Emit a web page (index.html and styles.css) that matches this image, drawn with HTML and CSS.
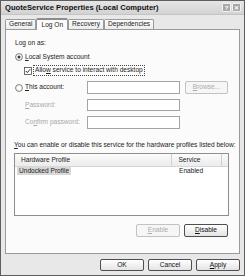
FILE: index.html
```html
<!DOCTYPE html>
<html>
<head>
<meta charset="utf-8">
<link rel="stylesheet" href="styles.css">
</head>
<body>
<div class="window">
  <div class="titlebar">
    <span class="title">QuoteService Properties (Local Computer)</span>
    <span class="tbtns"><span class="tbtn">?</span><span class="tbtn">✕</span></span>
  </div>
  <div class="content">
    <div class="tabs">
      <div class="tab">General</div>
      <div class="tab active">Log On</div>
      <div class="tab">Recovery</div>
      <div class="tab">Dependencies</div>
    </div>
    <div class="panel">
      <div class="loglabel">Log on as:</div>
      <div class="radiorow r1">
        <svg class="radio" width="8" height="8" viewBox="0 0 8 8"><circle cx="4" cy="4" r="3.4" fill="#fff" stroke="#5a5a5a" stroke-width="0.8"/><circle cx="4" cy="4" r="1.5" fill="#3a3a3a"/></svg>
        <span><u>L</u>ocal System account</span>
      </div>
      <div class="checkrow">
        <svg class="check" width="8" height="8" viewBox="0 0 8 8"><rect x="0.5" y="0.5" width="7" height="7" fill="#fff" stroke="#4a4a4a" stroke-width="0.8"/><path d="M1.8 4 L3.3 5.6 L6.2 2.2" fill="none" stroke="#2a2a2a" stroke-width="1"/></svg>
        <span class="focus">Allo<u>w</u> service to interact with desktop</span>
      </div>
      <div class="fieldrow r-this">
        <div class="flabel">
          <svg class="radio" width="8" height="8" viewBox="0 0 8 8"><circle cx="4" cy="4" r="3.4" fill="#fff" stroke="#5a5a5a" stroke-width="0.8"/></svg>
          <span><u>T</u>his account:</span>
        </div>
        <div class="field"></div>
        <div class="btn small disabled"><u>B</u>rowse...</div>
      </div>
      <div class="fieldrow r-pass">
        <div class="flabel indent disabled-text"><span><u>P</u>assword:</span></div>
        <div class="field"></div>
      </div>
      <div class="fieldrow r-conf">
        <div class="flabel indent disabled-text"><span>Co<u>n</u>firm password:</span></div>
        <div class="field"></div>
      </div>
      <div class="hint"><span><u>Y</u>ou can enable or disable this service for the hardware profiles listed below:</span></div>
      <div class="list">
        <div class="lhead">
          <div class="hcol c1">Hardware Profile</div>
          <div class="hcol c2">Service</div>
          <div class="hcol c3"></div>
        </div>
        <div class="lrow">
          <div class="lcell c1"><span class="sel">Undocked Profile</span></div>
          <div class="lcell c2">Enabled</div>
        </div>
      </div>
      <div class="listbtns">
        <div class="btn disabled"><u>E</u>nable</div>
        <div class="btn"><u>D</u>isable</div>
      </div>
    </div>
    <div class="footer">
      <div class="btn">OK</div>
      <div class="btn">Cancel</div>
      <div class="btn"><u>A</u>pply</div>
    </div>
  </div>
</div>
</body>
</html>
```

FILE: styles.css
```css
html, body {
  margin: 0;
  padding: 0;
  background: #ffffff;
}
body {
  font-family: "Liberation Sans", Arial, sans-serif;
  font-size: 6.6px;
  color: #222;
  line-height: 1;
}
.window {
  width: 245px;
  height: 276px;
  box-sizing: border-box;
  border: 1px solid #5e5e5e;
  background: #e8e8e8;
  display: flex;
  flex-direction: column;
}
.titlebar {
  height: 13px;
  background: linear-gradient(#e6e6e6, #d2d2d2);
  border-bottom: 1px solid #c4c4c4;
  display: flex;
  align-items: center;
  justify-content: space-between;
  padding: 0 3px 0 4px;
}
.title {
  font-weight: bold;
  font-size: 7.6px;
  color: #111;
}
.tbtns {
  display: flex;
  gap: 1px;
}
.tbtn {
  width: 7px;
  height: 7px;
  background: #a8a8a8;
  border: 1px solid #f2f2f2;
  border-radius: 1px;
  color: #fff;
  font-weight: bold;
  font-size: 6px;
  display: flex;
  align-items: center;
  justify-content: center;
}
.content {
  flex: 1;
  padding: 2px 4px 0 4px;
  display: flex;
  flex-direction: column;
}
.tabs {
  display: flex;
  align-items: flex-end;
  height: 12px;
}
.tab {
  height: 10px;
  box-sizing: border-box;
  border: 1px solid #9a9a9a;
  border-bottom: none;
  border-radius: 2px 2px 0 0;
  background: linear-gradient(#fdfdfd, #ececec);
  display: flex;
  align-items: center;
  justify-content: center;
  padding: 0 3px;
  white-space: nowrap;
}
.tab.active {
  height: 12px;
  padding: 0 4px;
  background: #fbfbfb;
  border-top: 2px solid #8c8c8c;
  position: relative;
  top: 1px;
  z-index: 1;
}
.panel {
  height: 225px;
  box-sizing: border-box;
  border: 1px solid #9a9a9a;
  background: #fbfbfb;
  padding: 0 10px 0 8px;
  display: flex;
  flex-direction: column;
}
.loglabel {
  margin-top: 9px;
  height: 8px;
  display: flex;
  align-items: center;
  padding-left: 1px;
}
.radiorow {
  display: flex;
  align-items: center;
  height: 8px;
  gap: 2px;
  padding-left: 1px;
}
.r1 { margin-top: 6px; }
.checkrow {
  display: flex;
  align-items: center;
  height: 9px;
  margin-top: 5px;
  padding-left: 10px;
  gap: 2px;
}
.focus {
  outline: 1px dotted #444;
  padding: 1px 1px;
}
.fieldrow {
  display: flex;
  align-items: center;
  padding-left: 1px;
}
.r-this { margin-top: 6px; height: 13px; }
.r-pass { margin-top: 5px; height: 12px; }
.r-conf { margin-top: 5px; height: 13px; }
.flabel {
  width: 72px;
  display: flex;
  align-items: center;
  gap: 2px;
  white-space: nowrap;
}
.flabel.indent { padding-left: 10px; box-sizing: border-box; }
.disabled-text { color: #a8a8a8; }
.field {
  width: 93px;
  height: 100%;
  box-sizing: border-box;
  border: 1px solid #a4a4a4;
  background: #ffffff;
}
.btn {
  width: 44px;
  height: 13px;
  box-sizing: border-box;
  border: 1px solid #4e4e4e;
  border-radius: 2px;
  background: linear-gradient(#ffffff, #e4e4e4);
  display: flex;
  align-items: center;
  justify-content: center;
  color: #111;
}
.btn.small { margin-left: 5px; width: 43px; }
.btn.disabled {
  border-color: #c2c2c2;
  color: #acacac;
  background: #f6f6f6;
}
.hint {
  margin-top: 12px;
  height: 8px;
  display: flex;
  align-items: center;
  white-space: nowrap;
}
.list {
  margin-top: 4px;
  height: 63px;
  width: 215px;
  box-sizing: border-box;
  border: 1px solid #8e8e8e;
  background: #ffffff;
}
.lhead {
  display: flex;
  height: 12px;
  background: linear-gradient(#fbfbfb, #ececec);
  border-bottom: 1px solid #d6d6d6;
}
.hcol {
  display: flex;
  align-items: center;
  padding-left: 6px;
  box-sizing: border-box;
  border-right: 1px solid #d0d0d0;
}
.c1 { width: 159px; }
.c2 { width: 50px; }
.c3 { flex: 1; border-right: none; }
.lrow {
  display: flex;
  height: 9px;
  align-items: center;
}
.lcell { box-sizing: border-box; }
.lrow .c1 { padding-left: 2px; }
.lrow .c2 { padding-left: 5px; }
.sel {
  background: #d8d8d8;
  padding: 1px 2px;
}
.listbtns {
  margin-top: 8px;
  display: flex;
  justify-content: flex-end;
  gap: 4px;
  padding-right: 1px;
}
.footer {
  margin-top: 5px;
  display: flex;
  justify-content: flex-end;
  gap: 4px;
}
.footer .btn { height: 12px; }
```
